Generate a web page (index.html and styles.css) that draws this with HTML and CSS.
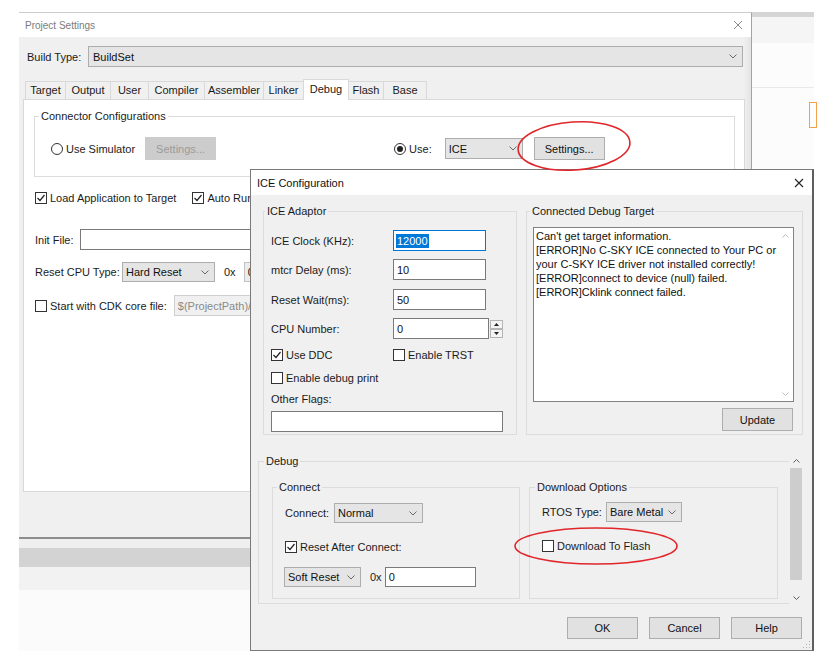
FILE: index.html
```html
<!DOCTYPE html>
<html lang="en">
<head>
<meta charset="utf-8">
<title>ICE Configuration</title>
<link rel="stylesheet" href="styles.css">
</head>
<body>
<div class="desk">
  <div class="bg-right">
    <div class="bgr-band"></div>
    <div class="bgr-head"></div>
    <div class="bgr-rule"></div>
    <div class="bgr-orange"></div>
  </div>
  <div class="bg-bottom">
    <div class="bgb-1"></div><div class="bgb-2"></div><div class="bgb-3"></div><div class="bgb-4"></div>
  </div>

  <div class="ps">
    <div class="ps-title"><span>Project Settings</span><svg class="x-icon" width="10" height="10" viewBox="0 0 10 10"><path d="M1 1L9 9M9 1L1 9"/></svg></div>
    <div class="ps-body">
      <div class="build-row">
        <span class="build-lbl">Build Type:</span>
        <div class="combo build-combo"><span>BuildSet</span><svg class="chev" width="8" height="5" viewBox="0 0 8 5"><path d="M0.5 0.5L4 4L7.5 0.5"/></svg></div>
      </div>
      <div class="tabs">
        <div class="tab">Target</div>
        <div class="tab">Output</div>
        <div class="tab">User</div>
        <div class="tab">Compiler</div>
        <div class="tab">Assembler</div>
        <div class="tab">Linker</div>
        <div class="tab sel">Debug</div>
        <div class="tab">Flash</div>
        <div class="tab">Base</div>
      </div>
      <div class="panel">
        <fieldset class="grp conn-grp">
          <legend>Connector Configurations</legend>
          <div class="conn-row">
            <span class="rb"></span><span class="ml3">Use Simulator</span>
            <div class="btn btn-dis sim-btn">Settings...</div>
            <span class="rb on use-rb"></span><span class="ml3">Use:</span>
            <div class="combo ice-combo"><span>ICE</span><svg class="chev" width="8" height="5" viewBox="0 0 8 5"><path d="M0.5 0.5L4 4L7.5 0.5"/></svg></div>
            <div class="btn set-btn">Settings...</div>
          </div>
        </fieldset>
        <div class="prow load-row">
          <span class="cb"><svg width="10" height="10" viewBox="0 0 10 10"><path d="M1.5 5L4 7.5L8.5 2"/></svg></span><span class="ml3">Load Application to Target</span>
          <span class="cb auto-cb"><svg width="10" height="10" viewBox="0 0 10 10"><path d="M1.5 5L4 7.5L8.5 2"/></svg></span><span class="ml3">Auto Run</span>
        </div>
        <div class="prow init-row">
          <span class="init-lbl">Init File:</span>
          <div class="inp init-inp"></div>
        </div>
        <div class="prow reset-row">
          <span class="reset-lbl">Reset CPU Type:</span>
          <div class="combo hard-combo"><span>Hard Reset</span><svg class="chev" width="8" height="5" viewBox="0 0 8 5"><path d="M0.5 0.5L4 4L7.5 0.5"/></svg></div>
          <span class="ox">0x</span>
          <div class="inp hex-inp">0</div>
        </div>
        <div class="prow cdk-row">
          <span class="cb"></span><span class="ml3">Start with CDK core file:</span>
          <div class="inp cdk-inp">$(ProjectPath)/$</div>
        </div>
      </div>
    </div>
  </div>

  <div class="ice">
    <div class="ice-title"><span>ICE Configuration</span><svg class="ice-x" width="10" height="10" viewBox="0 0 10 10"><path d="M1 1L9 9M9 1L1 9"/></svg></div>
    <div class="ice-body">
      <div class="top-row">
        <fieldset class="grp adaptor">
          <legend>ICE Adaptor</legend>
          <div class="f-row"><span class="f-lbl">ICE Clock (KHz):</span><div class="inp f-inp focus"><span class="hl">12000</span></div></div>
          <div class="f-row mt8"><span class="f-lbl">mtcr Delay (ms):</span><div class="inp f-inp">10</div></div>
          <div class="f-row mt9"><span class="f-lbl">Reset Wait(ms):</span><div class="inp f-inp">50</div></div>
          <div class="f-row mt8"><span class="f-lbl">CPU Number:</span><div class="inp cpu-inp">0</div>
            <div class="spin">
              <span><svg width="5" height="3" viewBox="0 0 5 3"><path d="M0 3L2.5 0L5 3Z"/></svg></span>
              <span><svg width="5" height="3" viewBox="0 0 5 3"><path d="M0 0L2.5 3L5 0Z"/></svg></span>
            </div>
          </div>
          <div class="c-row ddc-row">
            <span class="c-pair"><span class="cb"><svg width="10" height="10" viewBox="0 0 10 10"><path d="M1.5 5L4 7.5L8.5 2"/></svg></span><span class="ml3">Use DDC</span></span>
            <span class="cb"></span><span class="ml3">Enable TRST</span>
          </div>
          <div class="c-row dbgp-row"><span class="cb"></span><span class="ml3">Enable debug print</span></div>
          <div class="flags-lbl">Other Flags:</div>
          <div class="inp flags-inp"></div>
        </fieldset>
        <fieldset class="grp target">
          <legend>Connected Debug Target</legend>
          <div class="log">
            <div class="log-text">
              <div>Can't get target information.</div>
              <div>[ERROR]No C-SKY ICE connected to Your PC or</div>
              <div>your C-SKY ICE driver not installed correctly!</div>
              <div>[ERROR]connect to device (null) failed.</div>
              <div>[ERROR]Cklink connect failed.</div>
            </div>
            <div class="log-sb">
              <svg width="7" height="4" viewBox="0 0 7 4"><path d="M0.5 3.5L3.5 0.5L6.5 3.5"/></svg>
              <svg width="7" height="4" viewBox="0 0 7 4"><path d="M0.5 0.5L3.5 3.5L6.5 0.5"/></svg>
            </div>
          </div>
          <div class="btn upd">Update</div>
        </fieldset>
      </div>

      <div class="dbg-scroll">
        <div class="dbg-view">
          <fieldset class="grp debug-grp">
            <legend>Debug</legend>
            <div class="debug-inner">
              <fieldset class="grp connect">
                <legend>Connect</legend>
                <div class="r20">
                  <span class="connect-lbl">Connect:</span>
                  <div class="combo normal-combo"><span>Normal</span><svg class="chev" width="8" height="5" viewBox="0 0 8 5"><path d="M0.5 0.5L4 4L7.5 0.5"/></svg></div>
                </div>
                <div class="r20 rac-row"><span class="cb"><svg width="10" height="10" viewBox="0 0 10 10"><path d="M1.5 5L4 7.5L8.5 2"/></svg></span><span class="ml3">Reset After Connect:</span></div>
                <div class="r20 soft-row">
                  <div class="combo soft-combo"><span>Soft Reset</span><svg class="chev" width="8" height="5" viewBox="0 0 8 5"><path d="M0.5 0.5L4 4L7.5 0.5"/></svg></div>
                  <span class="ox2">0x</span>
                  <div class="inp zero-inp">0</div>
                </div>
              </fieldset>
              <fieldset class="grp download">
                <legend>Download Options</legend>
                <div class="r20">
                  <span class="rtos-lbl">RTOS Type:</span>
                  <div class="combo bare-combo"><span>Bare Metal</span><svg class="chev" width="8" height="5" viewBox="0 0 8 5"><path d="M0.5 0.5L4 4L7.5 0.5"/></svg></div>
                </div>
                <div class="r20 dtf-row"><span class="cb"></span><span class="ml3">Download To Flash</span></div>
              </fieldset>
            </div>
          </fieldset>
        </div>
        <div class="vsb">
          <div class="vsb-arrow"><svg width="7" height="4" viewBox="0 0 7 4"><path d="M0.5 3.5L3.5 0.5L6.5 3.5"/></svg></div>
          <div class="vsb-thumb"></div>
          <div class="vsb-track"></div>
          <div class="vsb-arrow"><svg width="7" height="4" viewBox="0 0 7 4"><path d="M0.5 0.5L3.5 3.5L6.5 0.5"/></svg></div>
        </div>
      </div>

      <div class="btn-row">
        <div class="btn dbtn">OK</div>
        <div class="btn dbtn">Cancel</div>
        <div class="btn dbtn">Help</div>
      </div>
    </div>
    <svg class="grip" width="8" height="8" viewBox="0 0 8 8"><rect x="6" y="0" width="1" height="1"/><rect x="3" y="3" width="1" height="1"/><rect x="6" y="3" width="1" height="1"/><rect x="0" y="6" width="1" height="1"/><rect x="3" y="6" width="1" height="1"/><rect x="6" y="6" width="1" height="1"/></svg>
  </div>

  <svg class="marks" width="840" height="666" viewBox="0 0 840 666">
    <ellipse cx="574" cy="146" rx="56" ry="24" transform="rotate(-4 574 146)"/>
    <ellipse cx="596" cy="546" rx="81" ry="18"/>
  </svg>
</div>
</body>
</html>
```

FILE: styles.css
```css
* { box-sizing: border-box; }
html, body { margin: 0; padding: 0; }
body {
  background: #fff;
  font-family: "Liberation Sans", Arial, sans-serif;
  font-size: 11px;
  color: #1b1b1b;
}
.desk { position: relative; width: 840px; height: 666px; overflow: hidden; }

/* group boxes (base rule first so specific classes override) */
.grp { margin: 0; padding: 0; border: 1px solid #dcdcdc; min-width: 0; flex: none; }
.grp > legend { padding: 0 2px; margin-left: 4px; height: 14px; line-height: 14px; color: #1b1b1b; }

/* background windows */
.bg-right {
  position: absolute; left: 752px; top: 12px; width: 62px; height: 157px;
  background: #fcfcfc; display: flex; flex-direction: column;
}
.bgr-band { height: 5px; background: #d5d5d5; }
.bgr-head { height: 26px; background: #f5f5f5; }
.bgr-rule { height: 1px; margin-top: 44px; background: #e9e9e9; }
.bgr-orange { width: 8px; height: 26px; margin: 14px 0 0 57px; border: 1px solid #f0a14a; }

.bg-bottom {
  position: absolute; left: 19px; top: 539px; width: 733px; height: 112px;
  display: flex; flex-direction: column;
}
.bgb-1 { height: 9px; background: #efefef; }
.bgb-2 { height: 19px; background: #d3d3d3; }
.bgb-3 { height: 23px; background: #f2f2f2; }
.bgb-4 { flex: 1; background: #fbfbfb; }

/* Project Settings window */
.ps {
  position: absolute; left: 19px; top: 12px; width: 733px; height: 527px;
  background: #f0f0f0;
  border-top: 1px solid #cdcdcd; border-right: 1px solid #a3a3a3; border-bottom: 2px solid #8e8e8e;
  display: flex; flex-direction: column;
}
.ps-title {
  height: 24px; flex: none; background: #fff;
  display: flex; align-items: center; justify-content: space-between;
  padding: 0 8px 0 6px; color: #7b7b7b; font-size: 10px;
}
.x-icon path { stroke: #8a8a8a; stroke-width: 1; fill: none; }
.ps-body {
  flex: 1; display: flex; flex-direction: column;
  background: linear-gradient(to right, #f0f0f0 calc(100% - 7px), #e4e4e4);
}
.build-row { display: flex; align-items: center; height: 21px; margin: 9px 0 0 8px; flex: none; }
.build-lbl { width: 61px; }

.combo {
  height: 21px; flex: none;
  display: flex; align-items: center; justify-content: space-between;
  padding: 0 5px 0 3px; background: #e5e5e5; border: 1px solid #adadad; color: #111;
  white-space: nowrap;
}
.chev path { fill: none; stroke: #6a6a6a; stroke-width: 1; }
.build-combo { width: 655px; padding-left: 4px; }

.tabs {
  display: flex; align-items: flex-end; height: 21px; flex: none;
  margin: 12px 0 -1px 6px; position: relative; z-index: 1;
}
.tab {
  height: 18px; margin: 0 0 1px -1px;
  border: 1px solid #d9d9d9; border-bottom: none; background: #f0f0f0;
  text-align: center; line-height: 17px; color: #1b1b1b;
}
.tab:first-child { margin-left: 0; }
.tab.sel { height: 21px; margin-bottom: 0; background: #fff; line-height: 18px; position: relative; z-index: 1; }
.tab:nth-child(1) { width: 41px; }
.tab:nth-child(2) { width: 46px; }
.tab:nth-child(3) { width: 39px; }
.tab:nth-child(4) { width: 57px; }
.tab:nth-child(5) { width: 60px; }
.tab:nth-child(6) { width: 41px; }
.tab:nth-child(7) { width: 46px; }
.tab:nth-child(8) { width: 36px; }
.tab:nth-child(9) { width: 44px; }

.panel {
  margin-left: 4px; width: 722px; height: 393px; flex: none;
  background: #fff; border: 1px solid #d9d9d9;
  display: flex; flex-direction: column;
}

.conn-grp { margin: 9px 9px 0 10px; height: 68px; padding: 14px 0 0 16px; }
.conn-grp > legend { margin-left: -12px; }
.conn-row { display: flex; align-items: center; height: 23px; }

.rb {
  width: 12px; height: 12px; border: 1px solid #333; border-radius: 50%; background: #fff;
  flex: none; display: flex; align-items: center; justify-content: center;
}
.rb.on::after { content: ""; width: 6px; height: 6px; border-radius: 50%; background: #222; }
.cb {
  width: 12px; height: 12px; border: 1px solid #333; background: #fff;
  flex: none; display: flex; align-items: center; justify-content: center;
}
.cb svg path { fill: none; stroke: #222; stroke-width: 1.2; }
.ml3 { margin-left: 3px; white-space: nowrap; }

.btn {
  width: 71px; height: 23px; flex: none;
  display: flex; align-items: center; justify-content: center;
  background: #e1e1e1; border: 1px solid #adadad; color: #111;
}
.btn-dis { background: #cccccc; border-color: #cccccc; color: #9b9b9b; }
.sim-btn { margin-left: 10px; }
.use-rb { margin-left: 178px; }
.ice-combo { width: 78px; margin-left: 13px; }
.set-btn { margin-left: 11px; }

.prow { display: flex; align-items: center; margin-left: 11px; flex: none; white-space: nowrap; }
.load-row { height: 13px; margin-top: 14px; }
.auto-cb { margin-left: 16px; }
.init-row { height: 21px; margin-top: 25px; }
.init-lbl { width: 45px; }
.inp {
  height: 21px; flex: none; border: 1px solid #7a7a7a; background: #fff;
  padding: 0 3px; display: flex; align-items: center; color: #111; white-space: nowrap; overflow: hidden;
}
.init-inp { width: 600px; }
.reset-row { height: 20px; margin-top: 12px; }
.reset-lbl { width: 87px; }
.hard-combo { width: 93px; height: 20px; }
.ox { margin-left: 9px; }
.hex-inp { margin-left: 8px; width: 300px; height: 20px; background: #ececec; border-color: #c3c3c3; }
.cdk-row { height: 21px; margin-top: 13px; }
.cdk-inp { margin-left: 7px; width: 300px; background: #f0f0f0; border-color: #cfcfcf; color: #8a8a8a; }

/* ICE dialog */
.ice {
  position: absolute; left: 250px; top: 169px; width: 564px; height: 482px;
  background: #f0f0f0; border: 1px solid #7a7a7a; border-right: 2px solid #5e5e5e;
  display: flex; flex-direction: column; z-index: 2;
}
.ice-title {
  height: 25px; flex: none; background: #fff;
  display: flex; align-items: center; justify-content: space-between;
  padding: 0 8px 0 6px; color: #111;
}
.ice-x path { stroke: #222; stroke-width: 1.1; fill: none; }
.ice-body { flex: 1; display: flex; flex-direction: column; }
.top-row { display: flex; gap: 9px; margin: 9px 0 0 12px; }

.adaptor { width: 254px; height: 231px; padding: 12px 0 0 7px; display: flex; flex-direction: column; }
.adaptor > legend { margin-left: -6px; }
.f-row { display: flex; align-items: center; height: 21px; flex: none; }
.f-lbl { width: 122px; }
.f-inp { width: 93px; }
.mt8 { margin-top: 8px; }
.mt9 { margin-top: 9px; }
.focus { border-color: #0078d7; padding-left: 2px; }
.hl { background: #0078d7; color: #fff; line-height: 14px; padding: 0 1px; }
.cpu-inp { width: 96px; }
.spin { display: flex; flex-direction: column; margin-left: 1px; }
.spin span {
  width: 13px; height: 9px; border: 1px solid #b5b5b5; background: #f4f4f4;
  display: flex; align-items: center; justify-content: center;
}
.spin path { fill: #222; }
.c-row { display: flex; align-items: center; height: 12px; flex: none; }
.c-pair { width: 122px; display: flex; align-items: center; }
.ddc-row { margin-top: 10px; }
.dbgp-row { margin-top: 11px; }
.flags-lbl { margin-top: 8px; height: 14px; line-height: 14px; }
.flags-inp { margin-top: 5px; width: 232px; }

.target { width: 277px; height: 231px; padding: 9px 0 0 6px; display: flex; flex-direction: column; }
.target > legend { margin-left: -3px; }
.log { width: 261px; height: 175px; border: 1px solid #828282; background: #fff; display: flex; flex: none; }
.log-text { flex: 1; padding: 1px 0 0 2px; line-height: 14px; color: #111; white-space: nowrap; }
.log-sb {
  width: 16px; display: flex; flex-direction: column; justify-content: space-between; align-items: center;
  padding: 6px 0 5px;
}
.log-sb path { fill: none; stroke: #bdbdbd; stroke-width: 1; }
.upd { margin: 6px 0 0 189px; }

.dbg-scroll { display: flex; margin: 18px 0 0 5px; width: 547px; height: 152px; flex: none; }
.dbg-view { flex: 1; overflow: hidden; }
.debug-grp { margin: 1px 0 0 2px; width: 560px; height: 150px; padding: 12px 0 0 13px; }
.debug-grp > legend { margin-left: -8px; }
.debug-inner { display: flex; gap: 9px; align-items: flex-start; }
.connect { width: 248px; height: 119px; padding: 9px 0 0 12px; }
.connect > legend { margin-left: -8px; }
.r20 { display: flex; align-items: center; height: 20px; white-space: nowrap; }
.connect-lbl { width: 49px; }
.normal-combo { width: 89px; height: 20px; }
.rac-row { margin-top: 14px; }
.soft-row { margin-top: 10px; }
.soft-combo { width: 77px; height: 20px; margin-left: -1px; }
.ox2 { margin-left: 9px; }
.zero-inp { width: 91px; height: 20px; margin-left: 3px; }
.download { width: 249px; height: 119px; padding: 8px 0 0 12px; }
.download > legend { margin-left: -7px; }
.rtos-lbl { width: 64px; }
.bare-combo { width: 76px; height: 20px; }
.dtf-row { margin-top: 14px; }

.vsb { width: 14px; flex: none; display: flex; flex-direction: column; background: #f0f0f0; }
.vsb-arrow { height: 15px; flex: none; display: flex; align-items: center; justify-content: center; }
.vsb-arrow path { fill: none; stroke: #606060; stroke-width: 1; }
.vsb-thumb { height: 112px; flex: none; background: #cdcdcd; margin: 0 1px; }
.vsb-track { flex: 1; }

.btn-row { display: flex; justify-content: flex-end; gap: 11px; margin-top: 12px; padding-right: 10px; }
.dbtn { height: 22px; }

.grip { position: absolute; right: 1px; bottom: 1px; }
.grip rect { fill: #b0b0b0; }

.marks { position: absolute; left: 0; top: 0; z-index: 5; pointer-events: none; }
.marks ellipse { fill: none; stroke: #e0262b; stroke-width: 1.6; }
```
